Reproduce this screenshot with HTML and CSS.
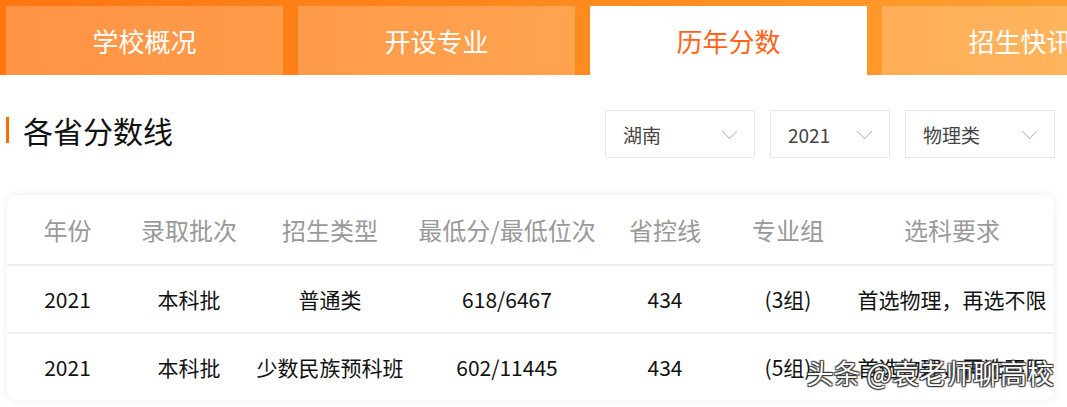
FILE: index.html
```html
<!DOCTYPE html>
<html>
<head>
    <meta charset="utf-8">
    <title>历年分数</title>
    <link rel="stylesheet" href="styles.css">
</head>
<body>
    <div class="tabs">
        <div class="tab">学校概况</div>
        <div class="tab">开设专业</div>
        <div class="tab active">历年分数</div>
        <div class="tab">招生快讯</div>
    </div>

    <div class="section-head">
        <h2 class="section-title">各省分数线</h2>
        <div class="filters">
            <div class="select select-wide">湖南<span class="chevron"></span></div>
            <div class="select">2021<span class="chevron"></span></div>
            <div class="select select-wide">物理类<span class="chevron"></span></div>
        </div>
    </div>

    <div class="card">
        <table class="scores">
            <thead>
                <tr>
                    <th class="c1">年份</th>
                    <th class="c2">录取批次</th>
                    <th class="c3">招生类型</th>
                    <th class="c4">最低分/最低位次</th>
                    <th class="c5">省控线</th>
                    <th class="c6">专业组</th>
                    <th class="c7">选科要求</th>
                </tr>
            </thead>
            <tbody>
                <tr>
                    <td>2021</td>
                    <td>本科批</td>
                    <td>普通类</td>
                    <td>618/6467</td>
                    <td>434</td>
                    <td>(3组)</td>
                    <td>首选物理，再选不限</td>
                </tr>
                <tr>
                    <td>2021</td>
                    <td>本科批</td>
                    <td>少数民族预科班</td>
                    <td>602/11445</td>
                    <td>434</td>
                    <td>(5组)</td>
                    <td>首选物理，再选不限</td>
                </tr>
            </tbody>
        </table>
        <div class="watermark">头条 @袁老师聊高校</div>
    </div>
</body>
</html>
```

FILE: styles.css
```css
html, body {
    margin: 0;
    padding: 0;
    background: #fff;
    overflow: hidden;
}
body {
    font-family: "Noto Sans CJK SC", "Noto Sans", sans-serif;
    color: #111;
    width: 1067px;
    height: 407px;
}
.tabs {
    display: flex;
    gap: 15px;
    padding: 6px 0 0 6px;
    height: 69px;
    background: linear-gradient(90deg, #ff7610 0%, #ff8a1e 55%, #ffa030 100%);
    overflow: hidden;
}
.tab {
    flex: 0 0 277px;
    height: 69px;
    line-height: 69px;
    text-align: center;
    font-size: 26px;
    color: #fff;
    background-color: rgba(255, 255, 255, 0.22);
}
.tab.active {
    background-color: #fff;
    color: #ff6417;
}
.section-head {
    display: flex;
    justify-content: space-between;
    align-items: center;
    padding: 35px 12px 0 6px;
}
.section-title {
    margin: 0;
    font-size: 30px;
    font-weight: normal;
    line-height: 34px;
    color: #111;
    border-left: 3px solid #ff6a00;
    padding-left: 14px;
    height: 26px;
    display: flex;
    align-items: center;
    position: relative;
    top: -4px;
}
.filters {
    display: flex;
    gap: 15px;
}
.select {
    height: 46px;
    border: 1px solid #e8e8e8;
    display: flex;
    align-items: center;
    justify-content: space-between;
    padding: 0 19px 0 17px;
    font-size: 19px;
    color: #444;
    box-sizing: content-box;
    width: 82px;
}
.select-wide {
    width: 112px;
}
.chevron {
    width: 10px;
    height: 10px;
    border-right: 1.5px solid #bbb;
    border-bottom: 1.5px solid #bbb;
    transform: rotate(45deg);
    margin-top: -6px;
}
.card {
    position: relative;
    margin: 37px 13px 0 7px;
    background: #fff;
    border-radius: 10px;
    box-shadow: 0 0 10px rgba(0, 0, 0, 0.08);
    overflow: hidden;
}
.scores {
    width: 100%;
    border-collapse: collapse;
    table-layout: fixed;
}
.scores th {
    height: 69px;
    font-size: 24px;
    font-weight: normal;
    color: #999;
    text-align: center;
    padding: 0;
    border-bottom: 2px solid #eee;
}
.scores td {
    height: 66px;
    font-size: 21px;
    text-align: center;
    padding: 0;
    color: #111;
    white-space: nowrap;
}
.scores tbody tr:first-child td {
    border-bottom: 2px solid #eee;
}
.c1 { width: 121px; }
.c2 { width: 122px; }
.c3 { width: 160px; }
.c4 { width: 194px; }
.c5 { width: 122px; }
.c6 { width: 124px; }
.c7 { width: 204px; }
.watermark {
    position: absolute;
    right: 0;
    bottom: 12px;
    font-size: 27px;
    line-height: 30px;
    color: #fff;
    text-shadow: 1px 1px 1px #333, -1px -1px 1px #333, 1px -1px 1px #333, -1px 1px 1px #333;
}
```
